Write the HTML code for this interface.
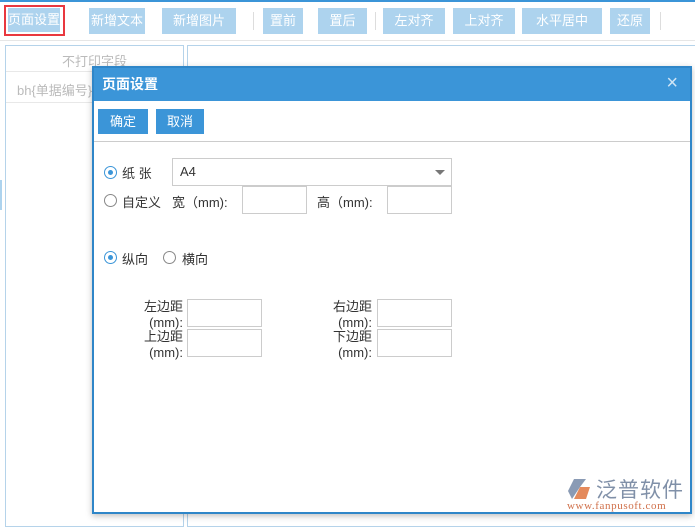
<!DOCTYPE html>
<html><head><meta charset="utf-8"><style>
body{margin:0;width:695px;height:522px;position:relative;overflow:hidden;background:#fff;font-family:"Liberation Sans","Noto Sans CJK SC",sans-serif;font-size:13px}
.tb{position:absolute;top:8px;height:26px;background:#add3ee;color:#fff;line-height:26px;text-align:center;font-size:13px}
.sep{position:absolute;top:12px;width:1px;height:18px;background:#ddd}
.abs{position:absolute}
.inp{position:absolute;border:1px solid #ccc;background:#fff;box-sizing:border-box}
.rad{position:absolute;width:13px;height:13px;border:1px solid #888;border-radius:50%;box-sizing:border-box;background:#fff}
.rad.on{border-color:#3b95d8}
.rad.on::after{content:"";position:absolute;left:3px;top:3px;width:5px;height:5px;border-radius:50%;background:#3b95d8}
.lbl{position:absolute;color:#333;font-size:13px}
</style></head><body>
<div class="abs" style="left:0;top:0;width:695px;height:2px;background:#3b95d8"></div>
<div class="abs" style="left:0;top:40px;width:695px;height:1px;background:#e6e6e6"></div>
<div class="abs" style="left:4px;top:5px;width:57px;height:27px;border:2px solid #e9383f"></div>
<div class="tb" style="left:8px;width:52px;top:8px;height:24px;line-height:24px">页面设置</div>
<div class="tb" style="left:89px;width:56px">新增文本</div>
<div class="tb" style="left:162px;width:74px">新增图片</div>
<div class="sep" style="left:253px"></div>
<div class="tb" style="left:263px;width:40px">置前</div>
<div class="tb" style="left:318px;width:49px">置后</div>
<div class="sep" style="left:375px"></div>
<div class="tb" style="left:383px;width:62px">左对齐</div>
<div class="tb" style="left:453px;width:62px">上对齐</div>
<div class="tb" style="left:522px;width:80px">水平居中</div>
<div class="tb" style="left:610px;width:40px">还原</div>
<div class="sep" style="left:660px"></div>
<div class="abs" style="left:5px;top:45px;width:177px;height:480px;border:1px solid #b5d3ea"></div>
<div class="abs" style="left:6px;top:71px;width:177px;height:1px;background:#e8e8e8"></div>
<div class="abs" style="left:6px;top:102px;width:177px;height:1px;background:#e8e8e8"></div>
<div class="abs" style="left:62px;top:51px;color:#bbb">不打印字段</div>
<div class="abs" style="left:17px;top:80px;color:#bbb">bh{单据编号}</div>
<div class="abs" style="left:0;top:180px;width:2px;height:30px;background:#add3ee"></div>
<div class="abs" style="left:187px;top:45px;width:510px;height:480px;border:1px solid #b5d3ea"></div>
<div class="abs" style="left:92px;top:66px;width:600px;height:448px;border:2px solid #2f86c8;background:#fff;box-shadow:0 2px 6px rgba(0,0,0,.25);box-sizing:border-box">
<div class="abs" style="left:0;top:0;width:596px;height:33px;background:#3b95d8;color:#fff;font-weight:bold;font-size:14px;line-height:33px;padding-left:8px;box-sizing:border-box">页面设置</div>
<div class="abs" style="right:12px;top:4px;color:#cfe5f5;font-size:20px">×</div>
<div class="abs" style="left:4px;top:41px;width:50px;height:25px;background:#3b95d8;color:#fff;text-align:center;line-height:25px">确定</div>
<div class="abs" style="left:62px;top:41px;width:48px;height:25px;background:#3b95d8;color:#fff;text-align:center;line-height:25px">取消</div>
<div class="abs" style="left:0;top:73px;width:596px;height:1px;background:#ccc"></div>
</div>
<div class="rad on" style="left:104px;top:166px"></div><div class="lbl" style="left:122px;top:163px">纸 张</div>
<div class="inp" style="left:172px;top:158px;width:280px;height:28px"><span style="position:absolute;left:7px;top:5px;color:#333">A4</span><span style="position:absolute;right:6px;top:11px;border:5px solid transparent;border-top:5px solid #777"></span></div>
<div class="rad" style="left:104px;top:194px"></div><div class="lbl" style="left:122px;top:192px">自定义</div>
<div class="lbl" style="left:172px;top:192px">宽（mm):</div>
<div class="inp" style="left:242px;top:186px;width:65px;height:28px"></div>
<div class="lbl" style="left:317px;top:192px">高（mm):</div>
<div class="inp" style="left:387px;top:186px;width:65px;height:28px"></div>
<div class="rad on" style="left:104px;top:251px"></div><div class="lbl" style="left:122px;top:249px">纵向</div>
<div class="rad" style="left:163px;top:251px"></div><div class="lbl" style="left:182px;top:249px">横向</div>
<div class="lbl" style="left:138px;top:299px;line-height:16px;text-align:right;width:45px">左边距<br>(mm):</div>
<div class="inp" style="left:187px;top:299px;width:75px;height:28px"></div>
<div class="lbl" style="left:138px;top:329px;line-height:16px;text-align:right;width:45px">上边距<br>(mm):</div>
<div class="inp" style="left:187px;top:329px;width:75px;height:28px"></div>
<div class="lbl" style="left:327px;top:299px;line-height:16px;text-align:right;width:45px">右边距<br>(mm):</div>
<div class="inp" style="left:377px;top:299px;width:75px;height:28px"></div>
<div class="lbl" style="left:327px;top:329px;line-height:16px;text-align:right;width:45px">下边距<br>(mm):</div>
<div class="inp" style="left:377px;top:329px;width:75px;height:28px"></div>
<svg class="abs" style="left:566px;top:477px" width="26" height="24"><path d="M8 2 L20 2 L14 10 L6 22 L2 14 Z" fill="#8a9bb5"/><path d="M14 10 L24 10 L20 22 L8 22 Z" fill="#e48a5c"/></svg>
<div class="abs" style="left:596px;top:474px;font-size:21px;color:#8090a8;letter-spacing:1px">泛普软件</div>
<div class="abs" style="left:567px;top:500px;font-size:11px;color:#d0704a;font-family:'Liberation Serif',serif;letter-spacing:.6px">www.fanpusoft.com</div>
</body></html>
